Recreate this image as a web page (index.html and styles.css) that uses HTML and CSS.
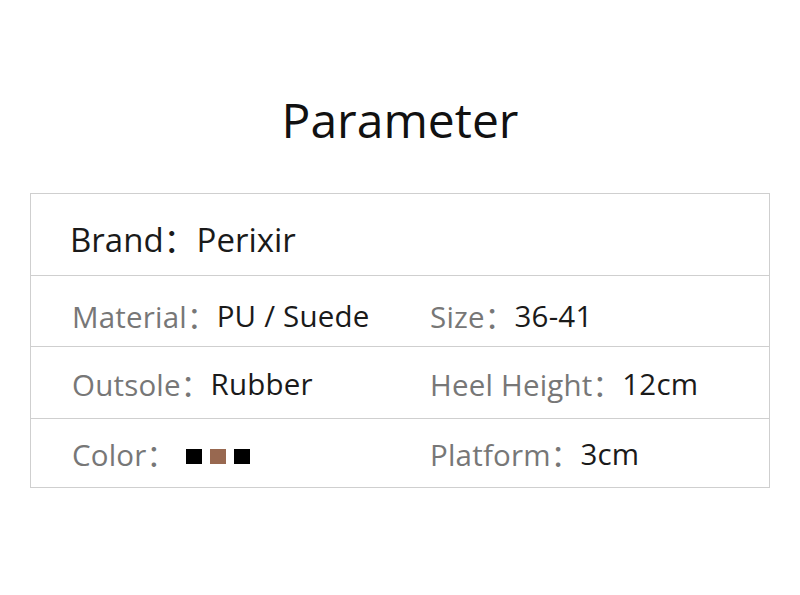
FILE: index.html
```html
<!DOCTYPE html>
<html>
<head>
<meta charset="utf-8">
<link rel="stylesheet" href="styles.css">
</head>
<body>
<div class="page">
  <h1 class="title">Parameter</h1>
  <div class="table">
    <div class="row row-brand">
      <div class="cell brand"><span class="value">Brand：Perixir</span></div>
    </div>
    <div class="row row-2">
      <div class="cell"><span class="label">Material：</span><span class="value">PU / Suede</span></div>
      <div class="cell"><span class="label">Size：</span><span class="value">36-41</span></div>
    </div>
    <div class="row row-3">
      <div class="cell"><span class="label">Outsole：</span><span class="value">Rubber</span></div>
      <div class="cell"><span class="label">Heel Height：</span><span class="value">12cm</span></div>
    </div>
    <div class="row row-4">
      <div class="cell"><span class="label">Color：</span>
        <span class="swatches"><span class="sw black"></span><span class="sw brown"></span><span class="sw black"></span></span>
      </div>
      <div class="cell"><span class="label">Platform：</span><span class="value">3cm</span></div>
    </div>
  </div>
</div>
</body>
</html>
```

FILE: styles.css
```css
html, body {
  margin: 0;
  padding: 0;
  background: #fff;
}
body {
  font-family: "Open Sans", "Noto Sans CJK SC", sans-serif;
  width: 800px;
  height: 595px;
  overflow: hidden;
}
.page {
  padding-top: 1px;
}
.title {
  margin: 0;
  height: 192px;
  padding-top: 86px;
  box-sizing: border-box;
  text-align: center;
  font-size: 48px;
  line-height: 65px;
  font-weight: 400;
  color: #111;
}
.table {
  margin-left: 30px;
  width: 740px;
  box-sizing: border-box;
  border: 1px solid #cfcfcf;
}
.row {
  display: grid;
  grid-template-columns: 358px 1fr;
  padding-left: 41px;
  align-items: center;
  border-bottom: 1px solid #cfcfcf;
  box-sizing: border-box;
}
.row:last-child {
  border-bottom: none;
}
.row-brand { height: 82px; padding-left: 39px; padding-top: 6px; }
.row-2 { height: 71px; padding-top: 8px; }
.row-3 { height: 72px; padding-top: 2px; }
.row-4 { height: 68px; padding-top: 0; }
.cell {
  display: flex;
  align-items: center;
  white-space: nowrap;
  font-size: 29.5px;
  letter-spacing: 0.2px;
}
.brand {
  font-size: 33px;
  letter-spacing: 0;
}
.label {
  color: #777;
}
.value {
  color: #1a1a1a;
}
.swatches {
  display: flex;
  gap: 8px;
  margin-left: 10px;
  margin-top: 6px;
}
.sw {
  width: 16px;
  height: 15px;
  display: block;
}
.black { background: #000; }
.brown { background: #986850; }
```
